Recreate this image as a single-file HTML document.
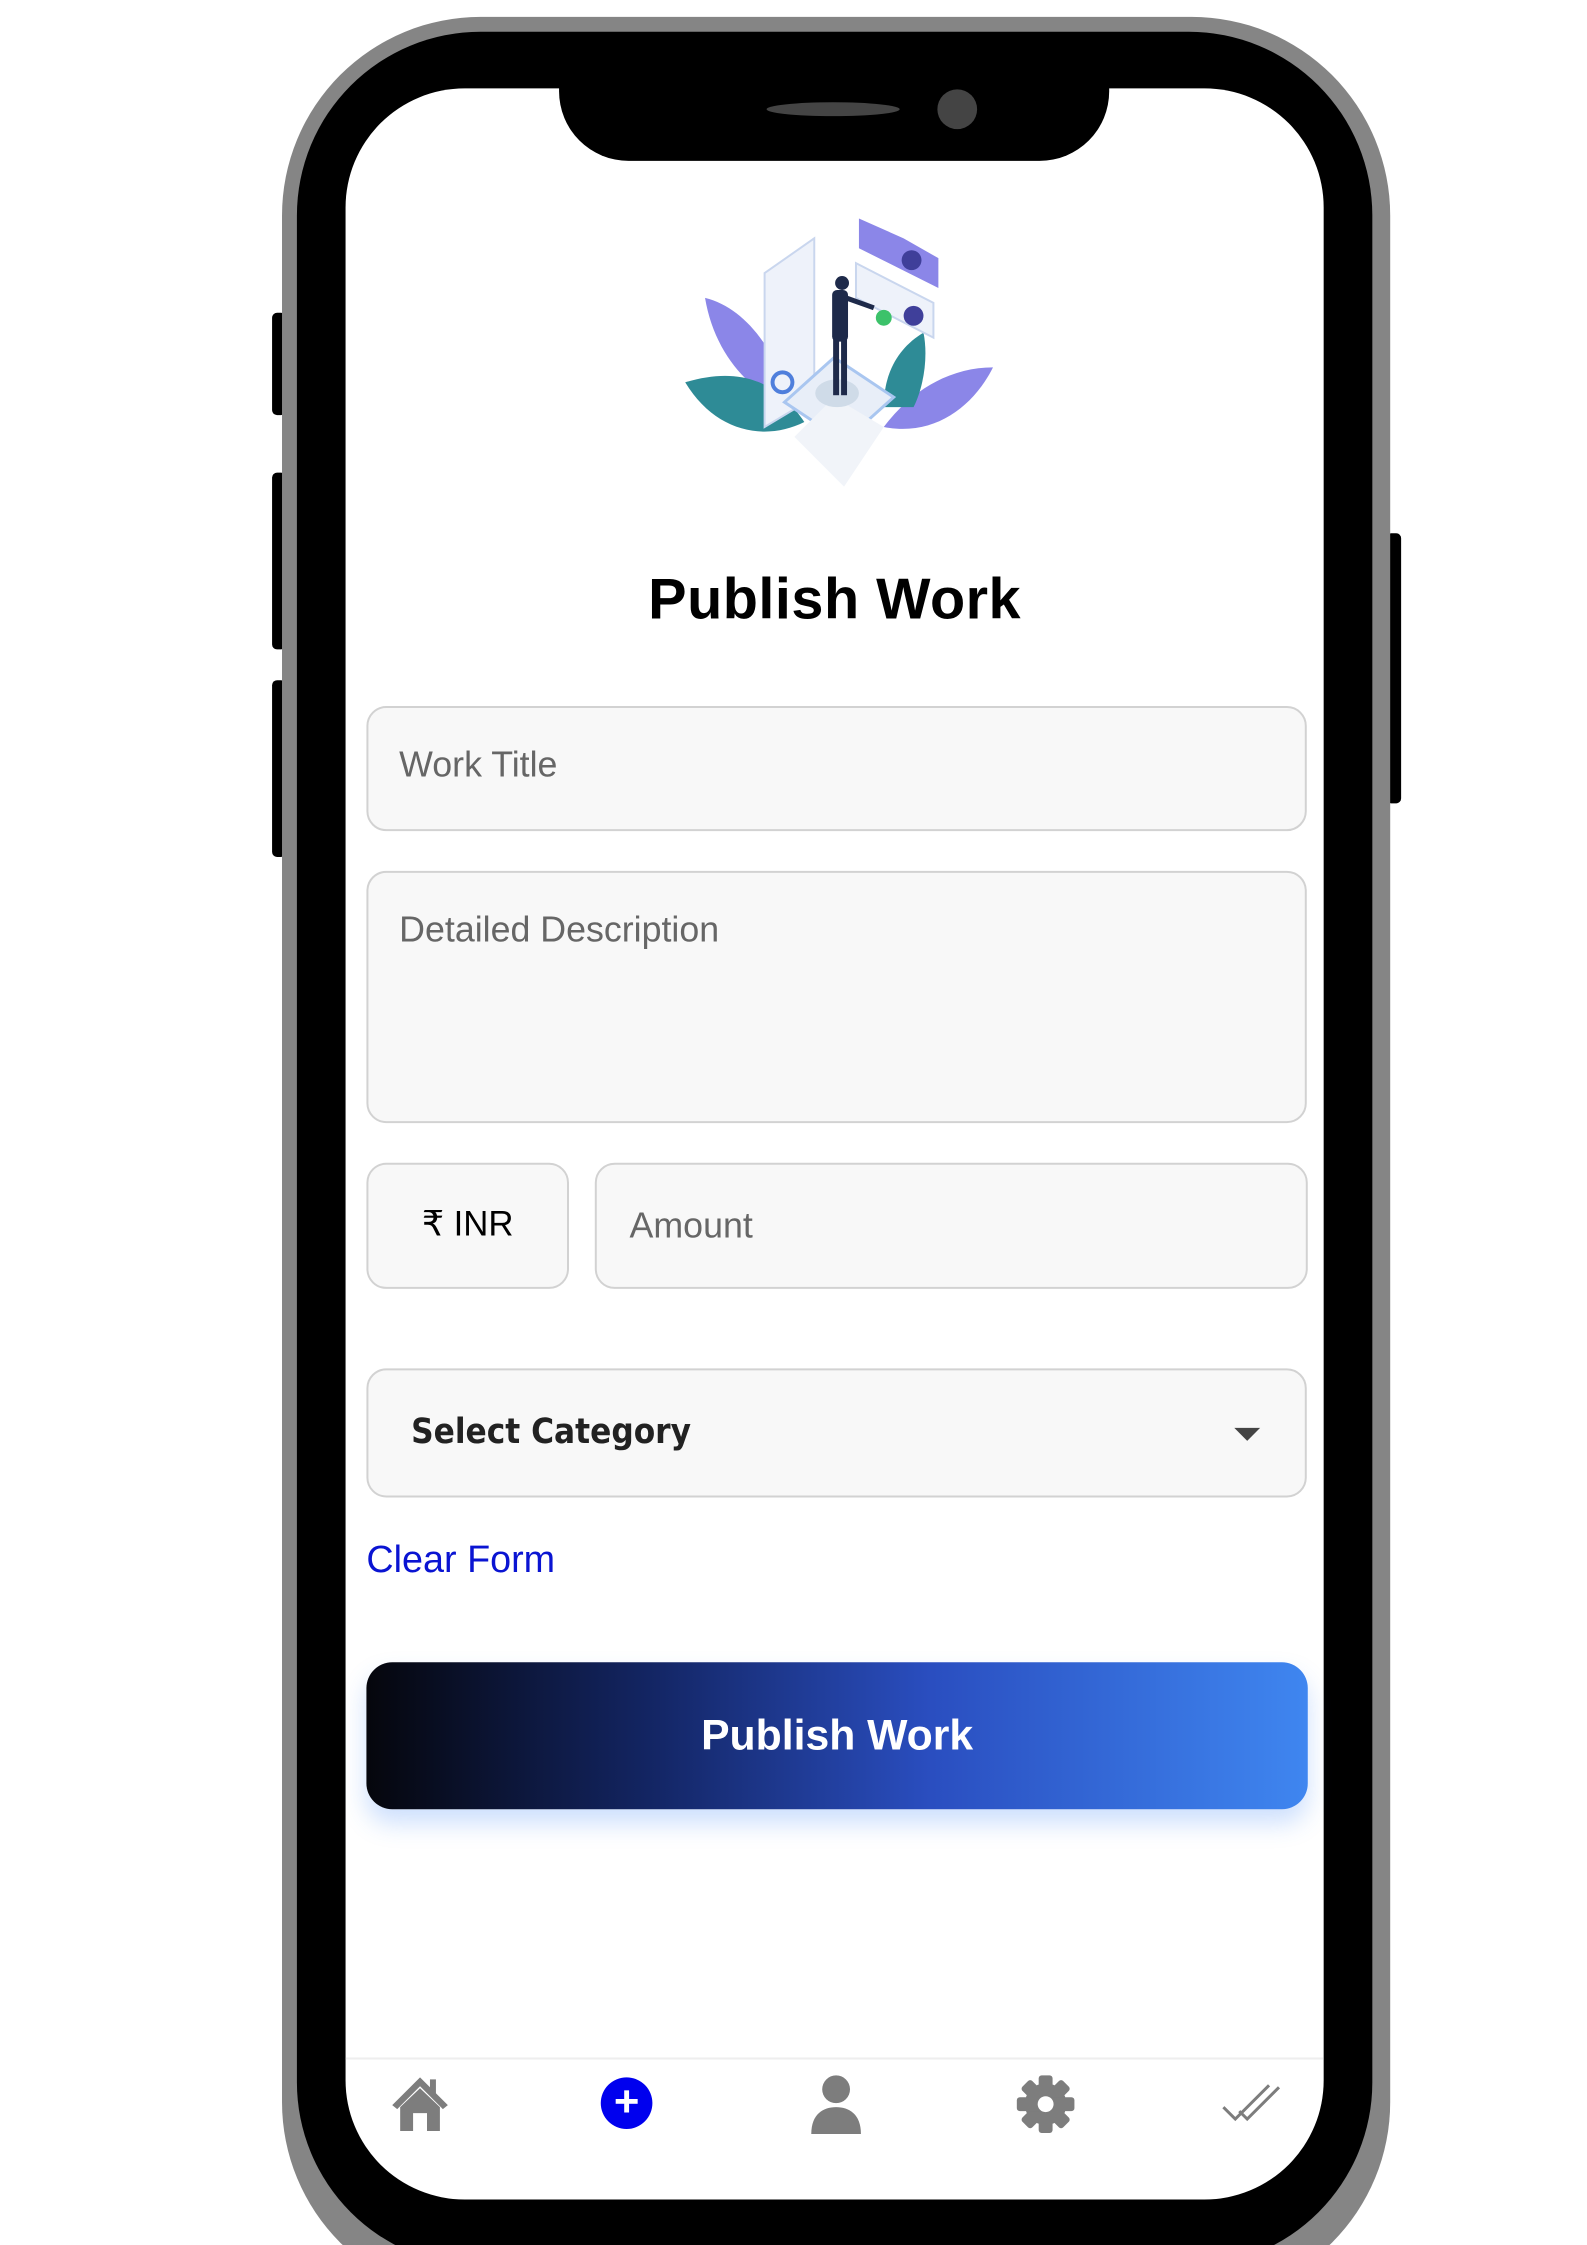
<!DOCTYPE html>
<html><head><meta charset="utf-8">
<style>
*{margin:0;padding:0;box-sizing:border-box}
html,body{width:1587px;height:2245px;background:#fff;overflow:hidden;position:relative;font-family:"Liberation Sans",sans-serif}
#wrap{position:absolute;left:0;top:0;width:1587px;height:2300px;transform:scale(0.993);transform-origin:0 0}
.abs{position:absolute}
.gray{left:284px;top:17px;width:1116px;height:2300px;background:#858585;border-radius:200px}
.black{left:299px;top:32px;width:1083px;height:2250px;background:#000;border-radius:185px}
.screen{left:348px;top:89px;width:985px;height:2126px;background:#fff;border-radius:120px;overflow:hidden}
.notch{left:563px;top:60px;width:554px;height:102px;background:#000;border-radius:0 0 70px 70px}
.btn{background:#000;border-radius:5px}
.field{position:absolute;background:#f8f8f8;border:2.5px solid #d2d2d2;border-radius:20px;color:#666;font-size:36px}
</style></head><body><div id="wrap">
<div class="abs btn" style="left:274px;top:315px;width:14px;height:103px"></div>
<div class="abs btn" style="left:274px;top:476px;width:14px;height:178px"></div>
<div class="abs btn" style="left:274px;top:685px;width:14px;height:178px"></div>
<div class="abs btn" style="left:1396px;top:537px;width:15px;height:272px"></div>
<div class="abs gray"></div>
<div class="abs black"></div>
<div class="abs screen">
  <div class="abs" style="left:0;right:0;top:1983px;height:2px;background:#eee"></div>
</div>
<div class="abs notch"></div>
<div class="abs" style="left:772px;top:103px;width:134px;height:14px;background:#444;border-radius:50%"></div>
<div class="abs" style="left:944px;top:90px;width:40px;height:40px;background:#444;border-radius:50%"></div>

<svg class="abs" style="left:690px;top:200px" width="312" height="295" viewBox="0 0 312 295">
  <path d="M20 100 C60 110 90 150 110 210 C70 200 30 160 20 100Z" fill="#8b86e8"/>
  <path d="M0 185 C50 170 90 180 120 225 C80 245 30 235 0 185Z" fill="#2e8b96"/>
  <path d="M310 170 C270 170 230 190 200 230 C250 240 290 210 310 170Z" fill="#8b86e8"/>
  <path d="M240 135 C215 150 200 175 200 210 L230 210 C240 190 245 160 240 135Z" fill="#2e8b96"/>
  <path d="M80 75 L130 40 L130 200 L80 230Z" fill="#eef2fa" stroke="#c9d6ee" stroke-width="2"/>
  <circle cx="98" cy="185" r="10" fill="none" stroke="#4f7fdc" stroke-width="4"/>
  <path d="M175 20 L220 40 L255 60 L255 90 L175 50Z" fill="#8b86e8"/>
  <circle cx="228" cy="62" r="10" fill="#3f3f9a"/>
  <path d="M172 65 L250 105 L250 140 L172 100Z" fill="#eef2fa" stroke="#c9d6ee" stroke-width="2"/>
  <circle cx="230" cy="118" r="10" fill="#3f3f9a"/>
  <path d="M150 160 L210 200 L160 245 L100 205Z" fill="#e8eef8" stroke="#a9c6f0" stroke-width="3"/>
  <path d="M150 200 L200 230 L160 290 L110 240Z" fill="#f1f4f9"/>
  <ellipse cx="153" cy="196" rx="22" ry="14" fill="#cfdbe8"/>
  <rect x="148" y="92" width="16" height="52" rx="5" fill="#1e2a4a"/>
  <rect x="149" y="140" width="6" height="58" fill="#1e2a4a"/>
  <rect x="157" y="140" width="6" height="58" fill="#1e2a4a"/>
  <circle cx="158" cy="85" r="7" fill="#1e2a4a"/>
  <path d="M162 100 L190 110" stroke="#1e2a4a" stroke-width="5"/>
  <circle cx="200" cy="120" r="8" fill="#3cc26a"/>
</svg>

<div class="abs" style="left:348px;width:985px;top:570px;text-align:center;font-size:58px;font-weight:bold;color:#000;letter-spacing:0.5px">Publish Work</div>

<div class="field" style="left:369px;top:711px;width:947px;height:126px;padding:36px 0 0 31px">Work Title</div>
<div class="field" style="left:369px;top:877px;width:947px;height:254px;padding:36px 0 0 31px">Detailed Description</div>
<div class="field" style="left:369px;top:1171px;width:204px;height:127px;text-align:center;padding-top:40px;color:#000;font-size:35px">₹ INR</div>
<div class="field" style="left:599px;top:1171px;width:718px;height:127px;padding:40px 0 0 33px">Amount</div>
<div class="field" style="left:369px;top:1378px;width:947px;height:130px;padding:42px 0 0 43px;color:#222;font-weight:bold;font-size:35px;font-family:'DejaVu Sans Condensed','Liberation Sans Narrow',sans-serif">Select Category
  <div class="abs" style="left:872px;top:58px;width:0;height:0;border-left:13px solid transparent;border-right:13px solid transparent;border-top:13px solid #444"></div>
</div>
<div class="abs" style="left:369px;top:1550px;font-size:38px;color:#0a14d2">Clear Form</div>
<div class="abs" style="left:369px;top:1674px;width:948px;height:148px;border-radius:26px;background:linear-gradient(90deg,#05060c 0%,#132563 30%,#2a4ec0 60%,#3f86f0 100%);box-shadow:0 14px 24px rgba(59,130,246,0.25);color:#fff;font-weight:bold;font-size:43px;text-align:center;line-height:148px">Publish Work</div>

<svg class="abs" style="left:392px;top:2088px" width="62" height="60" viewBox="0 0 62 60">
  <path d="M31 4 L3 32 L8 36 L31 13 L54 36 L59 32 L47 20 L47 6 L41 6 L41 14Z" fill="#7d7d7d"/>
  <path d="M11 34 L31 15 L51 34 L51 58 L38 58 L38 40 L24 40 L24 58 L11 58Z" fill="#7d7d7d"/>
</svg>
<div class="abs" style="left:605px;top:2092px;width:52px;height:52px;border-radius:50%;background:#0000ee;color:#fff;font-size:44px;line-height:50px;text-align:center;font-weight:bold">+</div>
<svg class="abs" style="left:815px;top:2089px" width="54" height="60" viewBox="0 0 54 60">
  <circle cx="27" cy="15" r="14" fill="#7d7d7d"/>
  <path d="M2 60 C2 40 14 33 27 33 C40 33 52 40 52 60Z" fill="#7d7d7d"/>
</svg>
<svg class="abs" style="left:1023px;top:2089px" width="60" height="60" viewBox="0 0 60 60">
  <g fill="#7d7d7d" transform="translate(30 30)">
    <circle r="21"/>
    <rect x="-7" y="-29" width="14" height="58" rx="3"/>
    <rect x="-7" y="-29" width="14" height="58" rx="3" transform="rotate(45)"/>
    <rect x="-7" y="-29" width="14" height="58" rx="3" transform="rotate(90)"/>
    <rect x="-7" y="-29" width="14" height="58" rx="3" transform="rotate(135)"/>
  </g>
  <circle cx="30" cy="30" r="8" fill="#fff"/>
</svg>
<svg class="abs" style="left:1230px;top:2096px" width="60" height="44" viewBox="0 0 60 44">
  <path d="M2 26 L14 38 L48 4 M18 30 L26 38 L58 6" fill="none" stroke="#7d7d7d" stroke-width="3"/>
</svg>
</div></body></html>
